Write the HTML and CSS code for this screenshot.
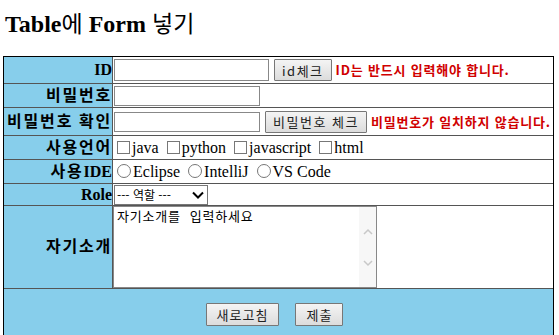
FILE: index.html
```html
<!DOCTYPE html>
<html lang="ko">
<head>
    <meta charset="UTF-8">
    <title>Table에 Form 넣기</title>
    <link rel="stylesheet" href="styles.css">
</head>
<body>
    <h2>Table<span class="ko">에</span> Form <span class="ko">넣기</span></h2>
    <form id="joinForm">
        <table class="form-table">
            <tr class="row-id">
                <th><span class="en">ID</span></th>
                <td>
                    <input type="text" class="txt txt-id">
                    <button type="button" class="btn">id체크</button>
                    <span class="warn">ID는 반드시 입력해야 합니다.</span>
                </td>
            </tr>
            <tr class="row-pw">
                <th>비밀번호</th>
                <td><input type="password" class="txt"></td>
            </tr>
            <tr class="row-pw2">
                <th>비밀번호 확인</th>
                <td>
                    <input type="password" class="txt">
                    <button type="button" class="btn">비밀번호 체크</button>
                    <span class="warn">비밀번호가 일치하지 않습니다.</span>
                </td>
            </tr>
            <tr class="row-lang">
                <th>사용언어</th>
                <td>
                    <label><input type="checkbox" class="chk">java</label>
                    <label><input type="checkbox" class="chk">python</label>
                    <label><input type="checkbox" class="chk">javascript</label>
                    <label><input type="checkbox" class="chk">html</label>
                </td>
            </tr>
            <tr class="row-ide">
                <th>사용<span class="en">IDE</span></th>
                <td>
                    <label><input type="radio" name="ide" class="rad">Eclipse</label>
                    <label><input type="radio" name="ide" class="rad">IntelliJ</label>
                    <label><input type="radio" name="ide" class="rad">VS Code</label>
                </td>
            </tr>
            <tr class="row-role">
                <th><span class="en">Role</span></th>
                <td>
                    <div class="select-box">
                        <span>--- 역할 ---</span>
                        <svg width="12" height="8" viewBox="0 0 12 8"><path d="M1 1.5 L6 6.5 L11 1.5" fill="none" stroke="#000" stroke-width="2"/></svg>
                    </div>
                </td>
            </tr>
            <tr class="row-intro">
                <th>자기소개</th>
                <td>
                    <div class="textarea">
                        <div class="textarea-text">자기소개를  입력하세요</div>
                        <div class="scrollbar">
                            <svg width="10" height="7" viewBox="0 0 10 7"><path d="M1 6 L5 2 L9 6" fill="none" stroke="#c8c8c8" stroke-width="1.5"/></svg>
                            <svg width="10" height="7" viewBox="0 0 10 7"><path d="M1 1 L5 5 L9 1" fill="none" stroke="#c8c8c8" stroke-width="1.5"/></svg>
                        </div>
                    </div>
                </td>
            </tr>
            <tr class="row-submit">
                <td colspan="2">
                    <button type="reset" class="btn">새로고침</button>
                    <button type="submit" class="btn">제출</button>
                </td>
            </tr>
        </table>
    </form>
</body>
</html>
```

FILE: styles.css
```css
body {
    margin: 0 3px;
    font-family: "Liberation Serif", "Noto Sans CJK KR", serif;
    font-size: 16px;
    color: #000;
    background-color: #fff;
}

h2 {
    font-size: 24px;
    font-weight: bold;
    margin: 0;
    padding: 8px 0 0 2px;
    height: 56px;
    box-sizing: border-box;
    line-height: 28px;
}

h2 .ko {
    font-family: "Noto Sans CJK KR", sans-serif;
    font-weight: normal;
    font-size: 23px;
}

.form-table {
    border: 1px solid #000;
    border-spacing: 0;
    width: 551px;
}

.form-table th,
.form-table td {
    padding: 0;
    border-top: 1px solid #555;
    line-height: 16px;
}

.form-table tr:first-child th,
.form-table tr:first-child td {
    border-top: none;
}

.form-table th {
    width: 108px;
    background-color: #87ceeb;
    text-align: right;
    border-right: 1px solid #555;
    font-size: 16px;
    white-space: nowrap;
    letter-spacing: 1.8px;
    padding-right: 0;
}

.form-table th .en {
    letter-spacing: 0;
}

.form-table td {
    white-space: nowrap;
}

.row-id { height: 26px; }
.row-pw { height: 24px; }
.row-pw2 { height: 28px; }
.row-lang { height: 24px; }
.row-ide { height: 24px; }
.row-role { height: 22px; }
.row-intro { height: 83px; }
.row-submit { height: 52px; }

.txt {
    width: 146px;
    height: 20px;
    border: 1px solid #888;
    padding: 0;
    margin: 0 0 0 1px;
    vertical-align: middle;
    box-sizing: border-box;
}

.txt-id {
    width: 155px;
    height: 22px;
}

.btn {
    font-family: "Noto Sans CJK KR", sans-serif;
    font-size: 13px;
    color: #222;
    background: linear-gradient(#f4f4f4, #dcdcdc);
    border: 1px solid #777;
    border-radius: 1px;
    padding: 0 7px;
    height: 22px;
    margin: 0 0 0 1px;
    vertical-align: middle;
    letter-spacing: 1.5px;
}

.warn {
    font-family: "Noto Sans CJK KR", sans-serif;
    color: #d00000;
    font-weight: bold;
    font-size: 13px;
    letter-spacing: 0.8px;
    vertical-align: middle;
}

.chk,
.rad {
    appearance: none;
    width: 13px;
    height: 13px;
    border: 1px solid #777;
    margin: 0 2px 0 4px;
    vertical-align: -1px;
    background: #fff;
}

.rad {
    border-radius: 50%;
    width: 14px;
    height: 14px;
}

.select-box {
    display: inline-flex;
    align-items: center;
    justify-content: space-between;
    width: 94px;
    height: 20px;
    border: 1px solid #777;
    box-sizing: border-box;
    padding: 0 3px 0 2px;
    margin-left: 1px;
    font-family: "Noto Sans CJK KR", sans-serif;
    font-size: 12px;
    vertical-align: middle;
}

.row-intro td {
    vertical-align: top;
}

.textarea {
    display: flex;
    width: 264px;
    height: 82px;
    border: 1px solid #888;
    box-sizing: border-box;
}

.textarea-text {
    flex: 1;
    padding: 1px 3px;
    font-family: "Noto Sans CJK KR", sans-serif;
    font-size: 13px;
    letter-spacing: 0.8px;
    line-height: 16px;
    white-space: pre;
}

.scrollbar {
    width: 17px;
    background-color: #f7f7f7;
    display: flex;
    flex-direction: column;
    justify-content: space-around;
    align-items: center;
    padding: 8px 0;
}

.row-submit td {
    background-color: #87ceeb;
    text-align: center;
    padding-right: 8px;
}

.row-submit .btn {
    font-size: 13px;
    padding: 0 10px;
    height: 23px;
    margin: 0 6px;
    letter-spacing: 1px;
}
```
